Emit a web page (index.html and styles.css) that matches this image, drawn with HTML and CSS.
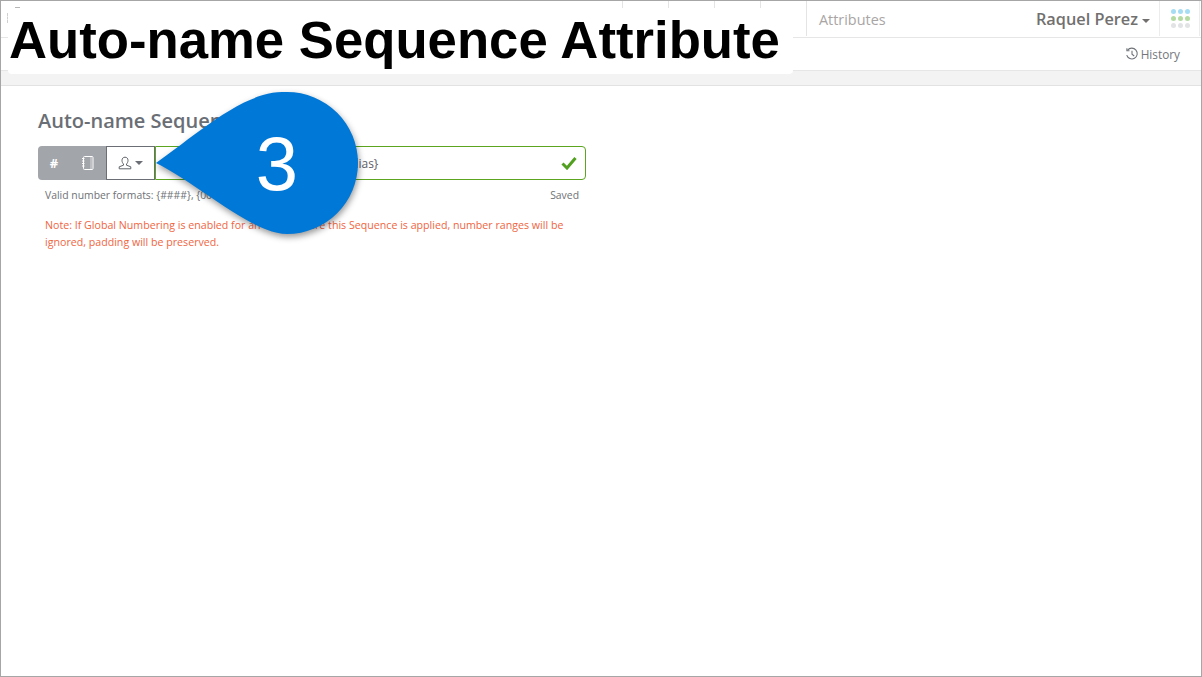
FILE: index.html
```html
<!DOCTYPE html>
<html lang="en">
<head>
<meta charset="utf-8">
<title>Auto-name Sequence Attribute</title>
<link rel="stylesheet" href="styles.css">
</head>
<body>
<div class="frame">
  <header class="topbar">
    <span class="logo-dash"></span>
    <span class="logo-dots"></span>
    <div class="tabs">
      <span class="tab tab-empty"></span>
      <span class="tab tab-empty"></span>
      <span class="tab tab-empty"></span>
      <span class="tab tab-empty"></span>
      <span class="tab tab-label">Attributes</span>
    </div>
    <div class="user">Raquel Perez<span class="caret"></span></div>
    <div class="apps">
      <span class="dot blue"></span><span class="dot blue"></span><span class="dot blue"></span>
      <span class="dot green"></span><span class="dot green"></span><span class="dot green"></span>
      <span class="dot grey"></span><span class="dot grey"></span><span class="dot grey"></span>
    </div>
  </header>
  <div class="subbar">
    <span class="history">
      <svg class="history-icon" viewBox="0 0 14 14" width="14" height="14" fill="none" stroke="#6f7378" stroke-width="1.1">
        <path d="M2.6 3.2A5.4 5.4 0 1 1 1.7 8.2"/>
        <path d="M1.9 1.2V3.8H4.5"/>
        <path d="M7 3.8V7.2L9.2 9"/>
      </svg>History</span>
  </div>
  <div class="band"></div>
  <main class="content">
    <h1 class="heading">Auto-name Sequence Attribute</h1>
    <div class="field">
      <div class="btn-group">
        <span class="btn btn-hash">#</span>
        <span class="btn btn-book">
          <svg viewBox="0 0 14 16" width="14" height="16" fill="none" stroke="#fff" stroke-width="1">
            <rect x="2.5" y="1.5" width="9.5" height="13" rx="1"/>
            <path d="M1 3.5H3.5M1 6H3.5M1 8.5H3.5M1 11H3.5"/>
            <path d="M10 1.5V14.5" stroke-opacity=".6"/>
          </svg>
        </span>
        <span class="btn btn-user">
          <svg viewBox="0 0 14 14" width="14" height="14" fill="none" stroke="#5f6368" stroke-width="1">
            <path d="M7 1.2C9 1.2 10 2.6 10 4.4C10 6 9.3 7.2 8.5 8V9.2L12.8 10.8V12.8H1.2V10.8L5.5 9.2V8C4.7 7.2 4 6 4 4.4C4 2.6 5 1.2 7 1.2Z"/>
          </svg>
          <span class="caret caret-small"></span>
        </span>
      </div>
      <div class="input">
        <span class="input-text">{Entity Number}-{User Alias}</span>
        <svg class="check" viewBox="0 0 16 14" width="16" height="14" fill="none" stroke="#52a01f" stroke-width="3">
          <path d="M1.5 7.5L6 12L14.5 2"/>
        </svg>
      </div>
    </div>
    <div class="hints">
      <span>Valid number formats: {####}, {0000}, {0000:1000-9999}</span>
      <span>Saved</span>
    </div>
    <p class="note">Note: If Global Numbering is enabled for an entity where this Sequence is applied, number ranges will be ignored, padding will be preserved.</p>
  </main>
  <div class="title-card">Auto-name Sequence Attribute</div>
  <div class="callout">
    <svg viewBox="0 0 220 160" width="220" height="160">
      <path class="drop" d="M4 80C40 55 90 9 130 9H135A71 71 0 0 1 135 151C100 151 45 100 4 80Z"/>
    </svg>
    <span class="callout-num">3</span>
  </div>
</div>
</body>
</html>
```

FILE: styles.css
```css
* { box-sizing: border-box; }
html, body { margin: 0; padding: 0; background: #fff; }
body { font-family: "Open Sans", "Noto Sans", sans-serif; }
.frame {
  position: relative;
  width: 1202px;
  height: 677px;
  border: 1px solid #a6a6a6;
  display: flex;
  flex-direction: column;
  overflow: hidden;
}
.topbar {
  position: relative;
  height: 37px;
  flex: none;
  display: flex;
  align-items: stretch;
  border-bottom: 1px solid #e6e6e6;
  padding-right: 1px;
}
.logo-dash { position: absolute; left: 14px; top: 6px; width: 5px; height: 1px; background: #b5b5b5; }
.logo-dots { position: absolute; left: 6px; top: 12px; width: 1px; height: 10px; border-left: 1px dashed #d0d0d0; }
.tabs { flex: 1; display: flex; justify-content: flex-end; padding-bottom: 1px; }
.tab { border-left: 1px solid #e4e4e4; display: flex; align-items: center; }
.tab-empty { width: 46px; }
.tab-label {
  width: 228px;
  padding: 2px 0 0 12px;
  font-size: 14.4px;
  color: #a9a5a5;
}
.user {
  width: 125px;
  display: flex;
  align-items: center;
  justify-content: flex-end;
  padding-right: 9px;
  font-size: 16.3px;
  font-weight: 600;
  color: #72706f;
}
.caret {
  display: inline-block;
  margin-left: 4px;
  margin-top: 3px;
  border-top: 4px solid #72706f;
  border-left: 4px solid transparent;
  border-right: 4px solid transparent;
}
.apps {
  width: 41px;
  padding-left: 1px;
  border-left: 1px solid #ececec;
  border-right: 1px solid #ececec;
  margin-bottom: 1px;
  display: grid;
  grid-template-columns: repeat(3, 5px);
  grid-auto-rows: 5px;
  gap: 2px;
  justify-content: center;
  align-content: center;
}
.dot { border-radius: 50%; }
.blue { background: #a5ddf5; }
.green { background: #b5dba3; }
.grey { background: #e2e3e5; }
.subbar {
  height: 33px;
  flex: none;
  border-bottom: 1px solid #e6e6e6;
  display: flex;
  align-items: center;
  justify-content: flex-end;
  padding-right: 21px;
}
.history { display: flex; align-items: center; gap: 2px; font-size: 11.8px; color: #73777c; }
.band { height: 15px; flex: none; background: #f3f3f3; border-bottom: 1px solid #e2e2e2; }
.content { flex: 1; padding: 22px 0 0 37px; width: 587px; }
.heading {
  margin: 0 0 12px;
  font-size: 20px;
  line-height: 26px;
  font-weight: 600;
  color: #6a6e75;
  white-space: nowrap;
}
.field { display: flex; height: 34px; width: 548px; }
.btn-group { display: flex; flex: none; }
.btn { display: flex; align-items: center; justify-content: center; height: 34px; }
.btn-hash {
  width: 32px;
  background: #a2a5aa;
  color: #fff;
  font-size: 13px;
  font-weight: 700;
  border-radius: 4px 0 0 4px;
}
.btn-book { width: 36px; background: #a2a5aa; }
.btn-user {
  width: 49px;
  gap: 2px;
  border: 1px solid #6b6f75;
  background: #fff;
}
.caret-small { margin: 0 0 0 1px; border-top-color: #6b6f75; }
.input {
  flex: 1;
  border: 1px solid #5ba51f;
  border-radius: 0 4px 4px 0;
  display: flex;
  align-items: center;
  justify-content: space-between;
  padding: 0 8px 0 0;
  font-size: 12px;
  color: #5c6068;
  min-width: 0;
}
.input-text { margin-left: 64px; white-space: nowrap; }
.hints {
  width: 541px;
  padding: 8px 0 0 7px;
  display: flex;
  justify-content: space-between;
  font-size: 10.4px;
  line-height: 15px;
  color: #6e7276;
}
.note {
  margin: 14px 0 0;
  padding-left: 7px;
  width: 541px;
  font-size: 10.65px;
  line-height: 17px;
  color: #f0653f;
}
.title-card {
  position: absolute;
  left: 7px;
  top: 7px;
  width: 785px;
  height: 66px;
  padding-left: 1px;
  background: #fff;
  border-radius: 4px;
  font-family: "Liberation Sans", Arial, sans-serif;
  font-size: 52.7px;
  font-weight: 700;
  line-height: 64px;
  color: #000;
  white-space: nowrap;
}
.callout { position: absolute; left: 151px; top: 82px; width: 220px; height: 160px; }
.callout svg { overflow: visible; filter: drop-shadow(1px 3px 3px rgba(0,0,0,.4)); }
.drop { fill: #0078d7; }
.callout-num {
  position: absolute;
  left: 95px;
  top: 40px;
  width: 60px;
  text-align: center;
  font-family: "Liberation Sans", Arial, sans-serif;
  font-size: 76px;
  line-height: 82px;
  color: #fff;
}
```
